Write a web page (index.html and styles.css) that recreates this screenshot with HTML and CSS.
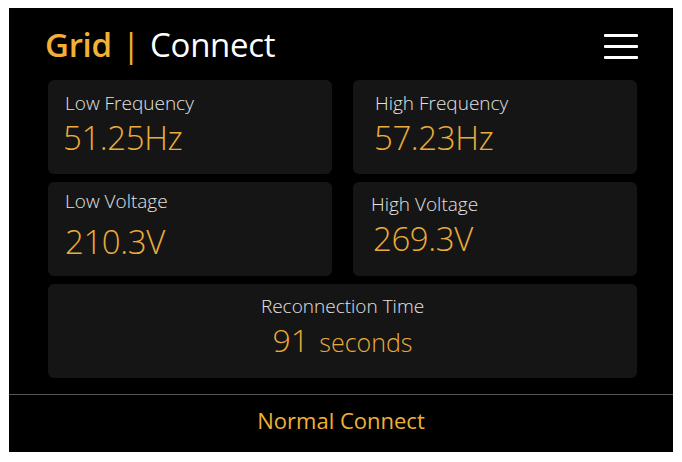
FILE: index.html
```html
<!DOCTYPE html>
<html lang="en">
<head>
<meta charset="utf-8">
<title>Grid | Connect</title>
<link rel="stylesheet" href="styles.css">
</head>
<body>
<div class="screen">
  <header class="header">
    <h1 class="title"><span class="title-accent">Grid</span> <span class="title-bar">|</span> Connect</h1>
    <button class="menu" aria-label="Menu"><span></span><span></span><span></span></button>
  </header>
  <main class="grid">
    <section class="card card--lf">
      <div class="label">Low Frequency</div>
      <div class="value">51.25Hz</div>
    </section>
    <section class="card card--hf">
      <div class="label">High Frequency</div>
      <div class="value">57.23Hz</div>
    </section>
    <section class="card card--lv">
      <div class="label">Low Voltage</div>
      <div class="value">210.3V</div>
    </section>
    <section class="card card--hv">
      <div class="label">High Voltage</div>
      <div class="value">269.3V</div>
    </section>
    <section class="card card--wide">
      <div class="label">Reconnection Time</div>
      <div class="value value--time">91 <span class="unit">seconds</span></div>
    </section>
  </main>
  <footer class="footer">Normal Connect</footer>
</div>
</body>
</html>
```

FILE: styles.css
```css
html, body {
  background: #ffffff;
}
body {
  margin: 8px 9px 10px 9px;
  font-family: "Open Sans", "Liberation Sans", sans-serif;
}
.screen {
  width: 664px;
  height: 444px;
  background: #000000;
  display: flex;
  flex-direction: column;
}
.header {
  height: 72px;
  box-sizing: border-box;
  padding: 17px 35px 0 36px;
  display: flex;
  justify-content: space-between;
  align-items: flex-start;
}
.title {
  margin: 0;
  font-size: 33px;
  line-height: 40px;
  font-weight: 400;
  letter-spacing: -0.3px;
  color: #ffffff;
}
.title-accent {
  color: #f2b134;
  font-weight: 600;
}
.title-bar {
  color: #f2b134;
  font-weight: 400;
  margin: 0 2px;
}
.menu {
  margin-top: 9px;
  padding: 0;
  width: 34px;
  background: none;
  border: 0;
  display: flex;
  flex-direction: column;
  gap: 8px;
}
.menu span {
  display: block;
  height: 3px;
  width: 34px;
  background: #ffffff;
  border-radius: 1px;
}
.grid {
  padding: 0 36px 0 39px;
  display: grid;
  grid-template-columns: 1fr 1fr;
  grid-template-rows: 94px 94px 94px;
  column-gap: 21px;
  row-gap: 8px;
}
.card {
  background: #151515;
  border-radius: 6px;
  box-sizing: border-box;
  padding: 11px 16px 0 17px;
}
.label {
  font-size: 19px;
  line-height: 25px;
  font-weight: 300;
  color: #e2e2e2;
}
.value {
  font-size: 33px;
  line-height: 44px;
  font-weight: 300;
  letter-spacing: -0.4px;
  color: #eaab3a;
}
.card--lf .value { margin-left: -2px; }
.card--hf { padding-left: 22px; }
.card--hf .value { margin-left: -1px; }
.card--lv { padding-top: 7px; }
.card--lv .value { margin-top: 6px; }
.card--hv { padding-left: 18px; padding-top: 10px; }
.card--hv .value { margin-left: 2px; }
.card--wide {
  grid-column: 1 / span 2;
  text-align: center;
  padding: 10px 0 0 0;
}
.value--time {
  font-size: 32px;
  line-height: 40px;
  letter-spacing: 0;
  margin-top: 1px;
}
.unit {
  font-size: 25px;
  margin-left: 2px;
}
.footer {
  margin-top: 16px;
  border-top: 1px solid #555555;
  flex: 1;
  display: flex;
  align-items: center;
  justify-content: center;
  padding-bottom: 8px;
  font-size: 22px;
  color: #f0b034;
}
```
